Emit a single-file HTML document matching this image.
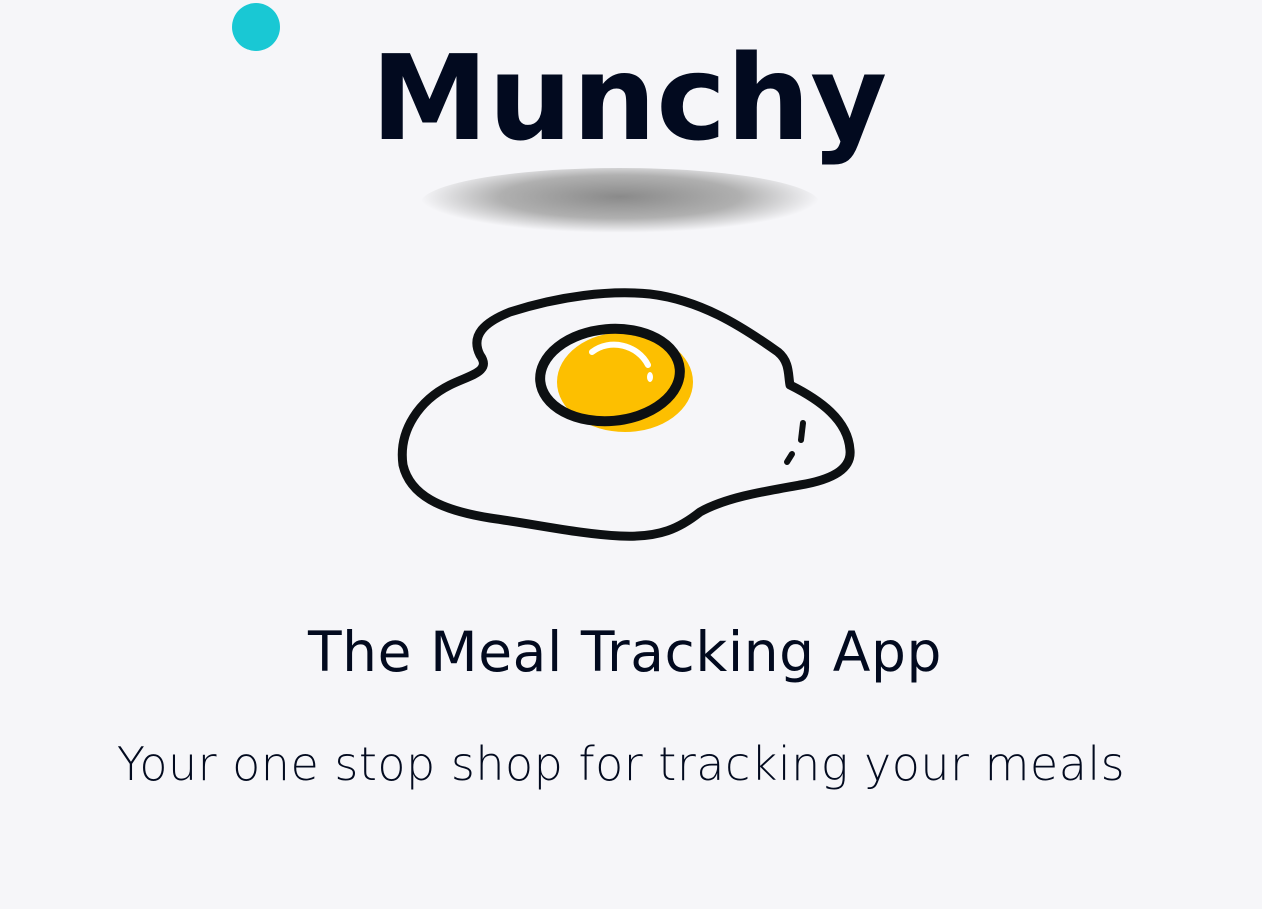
<!DOCTYPE html>
<html><head><meta charset="utf-8"><style>
html,body{margin:0;padding:0;background:#f6f6f9;width:1262px;height:909px;overflow:hidden;font-family:"DejaVu Sans","Liberation Sans",sans-serif;color:#020a1f}
.t{position:absolute;left:0;width:1262px;text-align:center;white-space:nowrap}
</style></head><body>
<svg width="1262" height="909" style="position:absolute;left:0;top:0">
<defs><radialGradient id="g" cx="50%" cy="40%" r="50%"><stop offset="0" stop-color="#8a8a8a"/><stop offset="0.6" stop-color="#b0b0b0"/><stop offset="1" stop-color="#f6f6f9"/></radialGradient></defs>
<circle cx="256" cy="27" r="24" fill="#19c8d4"/>
<ellipse cx="620" cy="204" rx="200" ry="36" fill="url(#g)"/>
<path d="M480,355 C470,335 485,322 510,312 C560,296 610,290 650,294 C700,300 740,325 778,352 C790,362 788,375 790,385 C820,400 848,420 850,450 C852,470 830,480 800,485 C760,492 725,498 700,512 C680,528 660,538 620,536 C580,534 540,525 490,518 C440,510 410,495 403,465 C398,430 420,400 450,385 C470,375 492,372 480,355 Z" fill="none" stroke="#0d1012" stroke-width="9" stroke-linejoin="round"/>
<ellipse cx="625" cy="382" rx="68" ry="50" fill="#fdbf00"/>
<ellipse cx="610" cy="375" rx="70" ry="46" fill="none" stroke="#0d1012" stroke-width="10" transform="rotate(-5 610 375)"/>
<path d="M592,352 C610,338 638,345 648,365" fill="none" stroke="#fff" stroke-width="6" stroke-linecap="round"/>
<ellipse cx="650" cy="377" rx="3" ry="5" fill="#fff"/>
<path d="M803,423 L801,440" stroke="#0d1012" stroke-width="6" stroke-linecap="round"/>
<path d="M792,454 L787,462" stroke="#0d1012" stroke-width="6" stroke-linecap="round"/>
</svg>
<div class="t" style="top:28px;font-size:118px;font-weight:bold;line-height:140px;left:-2px">Munchy</div>
<div class="t" style="top:614px;font-size:55px;line-height:76px;letter-spacing:0.6px;left:-6px">The Meal Tracking App</div>
<div class="t" style="top:734px;font-size:46px;line-height:60px;font-weight:300;letter-spacing:0.5px;left:-10px">Your one stop shop for tracking your meals</div>
</body></html>
